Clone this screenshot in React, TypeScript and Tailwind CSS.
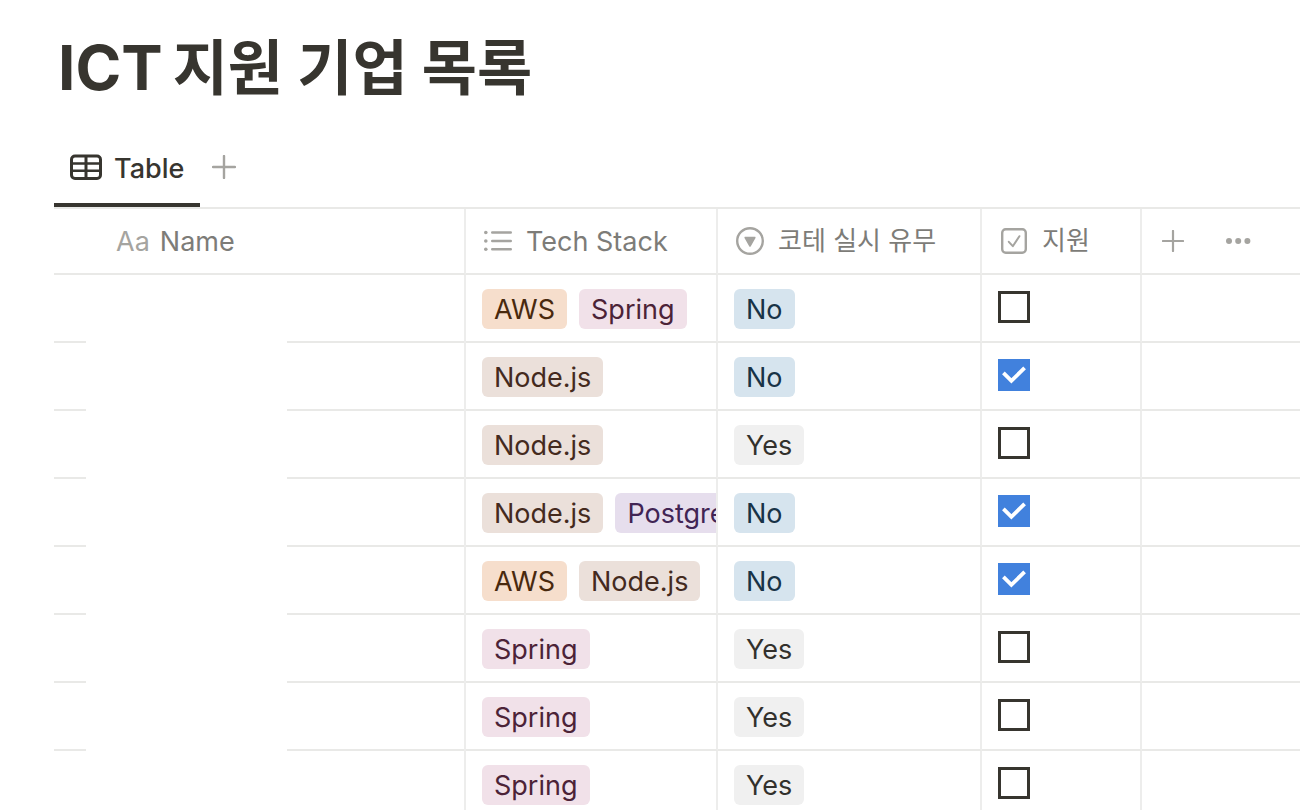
import { useState } from "react";
import clsx from "clsx";

type Company = { stack: string[]; test: "Yes" | "No"; applied: boolean };

const initialCompanies: Company[] = [
    { stack: ["AWS", "Spring"], test: "No", applied: false },
    { stack: ["Node.js"], test: "No", applied: true },
    { stack: ["Node.js"], test: "Yes", applied: false },
    { stack: ["Node.js", "PostgreSQL"], test: "No", applied: true },
    { stack: ["AWS", "Node.js"], test: "No", applied: true },
    { stack: ["Spring"], test: "Yes", applied: false },
    { stack: ["Spring"], test: "Yes", applied: false },
    { stack: ["Spring"], test: "Yes", applied: false },
];

const tagColors: Record<string, string> = {
    AWS: "bg-[#f6decc] text-[#49290e]",
    Spring: "bg-[#f1e1e9] text-[#4c2337]",
    "Node.js": "bg-[#ebe0da] text-[#442a1e]",
    PostgreSQL: "bg-[#e6deed] text-[#412454]",
    No: "bg-[#d6e4ee] text-[#183347]",
    Yes: "bg-[#f0f0f0] text-[#32302c]",
};

function Tag({ name }: { name: string }) {
    return (
        <span className={clsx("flex h-10 shrink-0 items-center rounded-md px-3 pt-0.5", tagColors[name])}>
            {name}
        </span>
    );
}

function TableIcon() {
    return (
        <svg className="h-[26px] w-8" viewBox="0 0 32 26" fill="none" stroke="currentColor" strokeWidth="3" aria-hidden="true">
            <rect x="1.5" y="2" width="29" height="22.5" rx="3.5" />
            <path d="M16 2v22.5" />
            <path d="M2 9.5h28M2 16.8h28" strokeWidth="2.4" />
        </svg>
    );
}

function PlusIcon({ className }: { className: string }) {
    return (
        <svg className={className} viewBox="0 0 24 24" stroke="currentColor" strokeWidth="2.4" strokeLinecap="round" aria-hidden="true">
            <path d="M12 1v22M1 12h22" />
        </svg>
    );
}

function ListIcon() {
    return (
        <svg className="h-7 w-7" viewBox="0 0 28 28" fill="none" stroke="currentColor" strokeWidth="2.4" strokeLinecap="round" aria-hidden="true">
            <path d="M8.2 5.5h18.6M8.2 14h18.6M8.2 22.3h18.6" />
            <g fill="currentColor" stroke="none">
                <circle cx="1.8" cy="5.5" r="1.8" />
                <circle cx="1.8" cy="14" r="1.8" />
                <circle cx="1.8" cy="22.3" r="1.8" />
            </g>
        </svg>
    );
}

function SelectIcon() {
    return (
        <svg className="h-7 w-7" viewBox="0 0 28 28" fill="none" aria-hidden="true">
            <circle cx="14" cy="14" r="12.8" stroke="currentColor" strokeWidth="2.4" />
            <path d="M9.2 9.8h9.6c.6 0 1 .6.7 1.2l-4.8 8.4c-.3.6-1.1.6-1.4 0L8.5 11c-.3-.6.1-1.2.7-1.2z" fill="currentColor" />
        </svg>
    );
}

function CheckIcon() {
    return (
        <svg className="h-7 w-7" viewBox="0 0 28 28" fill="none" stroke="currentColor" strokeWidth="2.4" aria-hidden="true">
            <rect x="2.2" y="2.2" width="23.6" height="23.6" rx="3.5" />
            <path d="M8.8 14.8l4 4.4 6.6-10" strokeWidth="2" strokeLinecap="round" strokeLinejoin="round" />
        </svg>
    );
}

const headCell = "h-[66px] border-r-2 border-b-2 border-r-[#ededec] border-b-[#e9e9e7] px-[18px] text-left font-normal";
const bodyCell = "border-r-2 border-b-2 border-r-[#ededec] border-b-[#e9e9e7] px-4 align-top";

export default function App() {
    const [companies, setCompanies] = useState<Company[]>(initialCompanies);

    function toggleApplied(idx: number) {
        setCompanies(companies.map((c, i) => (i === idx ? { ...c, applied: !c.applied } : c)));
    }

    return (
        <main className="h-screen overflow-hidden bg-white pl-[54px] font-['Inter','Noto_Sans_CJK_KR',sans-serif] text-[27px] leading-10 text-[#37352f]">
            <h1 className="flex h-[131px] items-center gap-2.5 pt-1 pl-1 text-[62px] leading-20 font-bold">
                <span>ICT</span>
                <span className="text-[60px]">지원 기업 목록</span>
            </h1>

            <div className="flex h-[78px] items-stretch border-b-2 border-[#e9e9e7]">
                <button className="flex items-center gap-3 border-b-4 border-[#37352f] px-4 font-medium">
                    <TableIcon />
                    <span className="pt-1">Table</span>
                </button>
                <button className="flex items-center px-3 pb-1 text-[#a5a4a0]" aria-label="Add view">
                    <PlusIcon className="h-6 w-6" />
                </button>
            </div>

            <table className="w-full table-fixed border-separate border-spacing-0">
                <colgroup>
                    <col className="w-[412px]" />
                    <col className="w-[252px]" />
                    <col className="w-[264px]" />
                    <col className="w-[160px]" />
                    <col />
                </colgroup>
                <thead className="text-[#7d7c78]">
                    <tr>
                        <th className={headCell}>
                            <div className="flex items-center gap-2.5 pt-0.5 pl-11">
                                <span className="text-[#a5a4a0]">Aa</span>
                                Name
                            </div>
                        </th>
                        <th className={headCell}>
                            <div className="flex items-center gap-3.5">
                                <span className="text-[#a5a4a0]"><ListIcon /></span>
                                <span className="pt-0.5">Tech Stack</span>
                            </div>
                        </th>
                        <th className={headCell}>
                            <div className="flex items-center gap-3.5">
                                <span className="text-[#a5a4a0]"><SelectIcon /></span>
                                <span className="text-[26px]">코테 실시 유무</span>
                            </div>
                        </th>
                        <th className={headCell}>
                            <div className="flex items-center gap-3.5">
                                <span className="text-[#a5a4a0]"><CheckIcon /></span>
                                <span className="text-[26px]">지원</span>
                            </div>
                        </th>
                        <th className="border-b-2 border-[#e9e9e7] px-5">
                            <div className="flex items-center gap-10 text-[#a5a4a0]">
                                <button aria-label="Add property">
                                    <PlusIcon className="h-[22px] w-[22px]" />
                                </button>
                                <button aria-label="More options">
                                    <svg className="h-6 w-7" viewBox="0 0 28 24" fill="currentColor" aria-hidden="true">
                                        <circle cx="5" cy="12" r="3" />
                                        <circle cx="14.2" cy="12" r="3" />
                                        <circle cx="23.4" cy="12" r="3" />
                                    </svg>
                                </button>
                            </div>
                        </th>
                    </tr>
                </thead>
                <tbody>
                    {companies.map((company, idx) => (
                        <tr key={idx}>
                            {/* names are hidden, the row line is left open under them */}
                            <td className="border-r-2 border-[#ededec] p-0">
                                <div className="flex h-[68px]">
                                    <div className="w-8 border-b-2 border-[#e9e9e7]" />
                                    <div className="w-[201px]" />
                                    <div className="flex-1 border-b-2 border-[#e9e9e7]" />
                                </div>
                            </td>
                            <td className={clsx(bodyCell, "pt-[14px] pr-0")}>
                                <div className="flex gap-3 overflow-hidden">
                                    {company.stack.map((name) => (
                                        <Tag key={name} name={name} />
                                    ))}
                                </div>
                            </td>
                            <td className={clsx(bodyCell, "pt-[14px]")}>
                                <div className="flex">
                                    <Tag name={company.test} />
                                </div>
                            </td>
                            <td className={clsx(bodyCell, "pt-4")}>
                                <label className="grid h-8 w-8">
                                    <input
                                        type="checkbox"
                                        aria-label="지원"
                                        checked={company.applied}
                                        onChange={() => toggleApplied(idx)}
                                        className="col-start-1 row-start-1 h-8 w-8 appearance-none border-3 border-[#37352f] checked:border-[#4181dd] checked:bg-[#4181dd]"
                                    />
                                    {company.applied && (
                                        <svg className="pointer-events-none col-start-1 row-start-1 h-8 w-8" viewBox="0 0 32 32" fill="none" stroke="white" strokeWidth="3.8" aria-hidden="true">
                                            <path d="M5.4 13.8l8 8L26.6 8.800" />
                                        </svg>
                                    )}
                                </label>
                            </td>
                            <td className="border-b-2 border-[#e9e9e7]" />
                        </tr>
                    ))}
                </tbody>
            </table>
        </main>
    );
}
